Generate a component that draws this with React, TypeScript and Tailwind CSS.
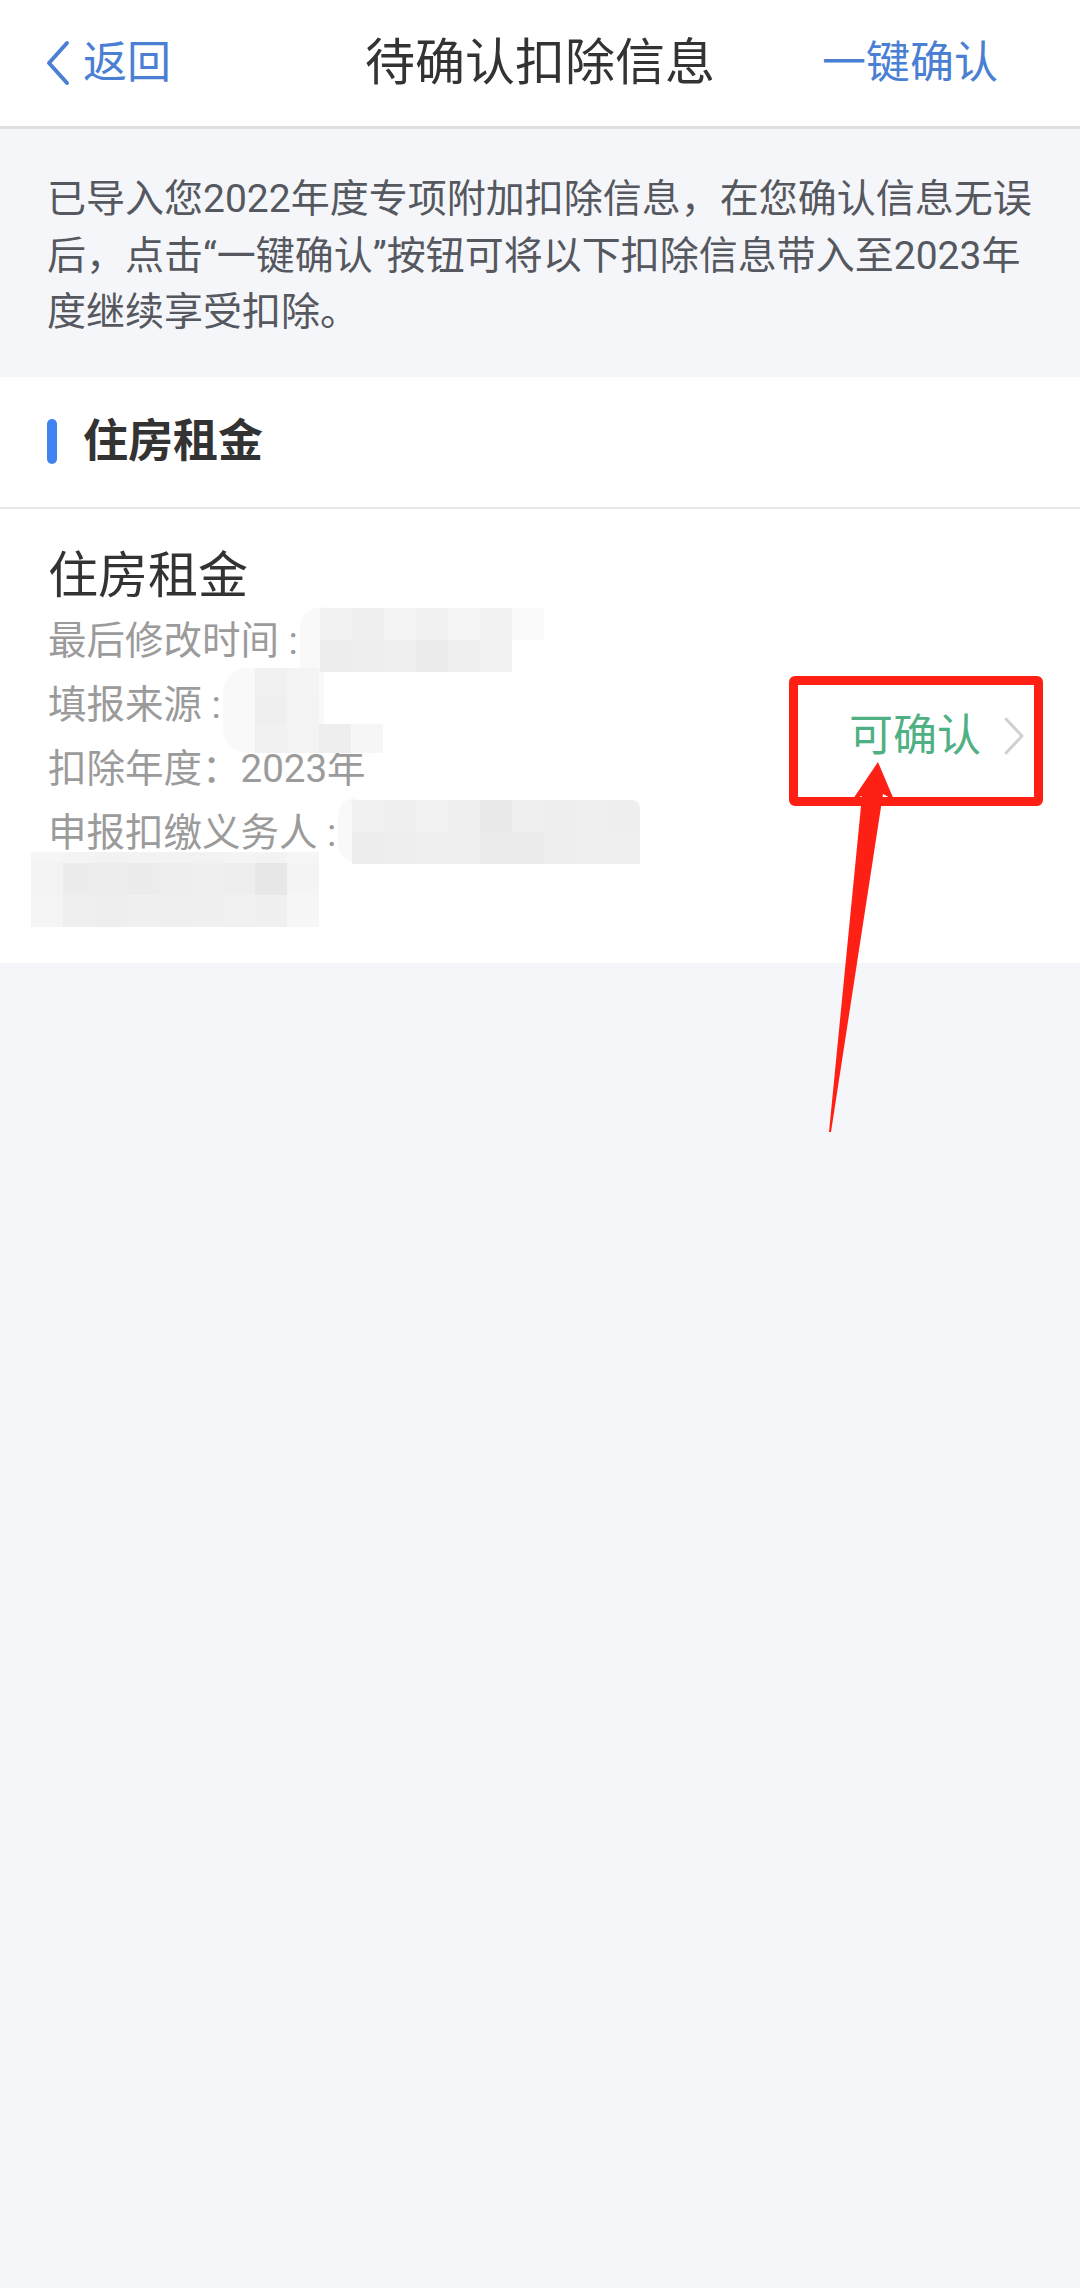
import React from 'react';

type Cell = string | null;

interface MosaicProps {
  className: string;
  cols: number;
  cellW: number;
  rowHeights: number[];
  cells: Cell[][];
}

// pixelated redaction blocks over private values
function Mosaic({ className, cols, cellW, rowHeights, cells }: MosaicProps) {
  return (
    <div className={`absolute flex flex-col overflow-hidden ${className}`}>
      {cells.map((row, r) => (
        <div key={r} className="flex">
          {Array.from({ length: cols }).map((_, c) => (
            <div
              key={c}
              style={{ width: cellW, height: rowHeights[r], background: row[c] ?? 'transparent' }}
            />
          ))}
        </div>
      ))}
    </div>
  );
}

const ROWS = [
  { label: '最后修改时间', colon: ' :', value: '' },
  { label: '填报来源', colon: ' :', value: '' },
  { label: '扣除年度', colon: '：', value: '2023年' },
  { label: '申报扣缴义务人', colon: ' :', value: '' },
];

export default function App() {
  return (
    <div
      className="relative min-h-[2288px] w-[1080px] bg-[#f5f6fa] overflow-hidden"
      style={{ fontFamily: 'Roboto, "Noto Sans CJK SC", sans-serif' }}
    >
      {/* Nav bar */}
      <div className="grid h-[129px] grid-cols-[1fr_auto_1fr] items-center border-b-[3px] border-[#dfdfdf] bg-white">
        <div className="flex items-center pl-[45px] text-[44px] text-[#4b7fd3]">
          <svg width="26" height="46" viewBox="0 0 26 46" fill="none">
            <path d="M22 3 L4 23 L22 43" stroke="#4b7fd3" strokeWidth="4" strokeLinecap="round" strokeLinejoin="round" />
          </svg>
          <span className="ml-[12px] leading-none">返回</span>
        </div>
        <div className="text-[50px] leading-none text-[#333333]">待确认扣除信息</div>
        <div className="flex justify-end pr-[82px] text-[44px] leading-none text-[#4b7fd3]">一键确认</div>
      </div>

      {/* Notice */}
      <div className="px-[47px] pt-[42px] pb-[36px] text-[39px] leading-[56.5px] text-[#55585e]">
        已导入您2022年度专项附加扣除信息，在您确认信息无误
        <br />
        后，点击“一键确认”按钮可将以下扣除信息带入至2023年
        <br />
        度继续享受扣除。
      </div>

      {/* Section header */}
      <div className="flex h-[132px] items-center border-b-2 border-[#e8e8e8] bg-white pl-[47px]">
        <div className="h-[45px] w-[10px] rounded-full bg-[#3f84ef]" />
        <div className="ml-[26px] text-[45px] font-bold leading-none text-[#333333]">住房租金</div>
      </div>

      {/* Item */}
      <div className="flex h-[454px] items-center justify-between bg-white">
        <div className="flex h-full flex-col pl-[48px] pt-[34px]">
          <div className="text-[50px] leading-[66px] text-[#333333]">住房租金</div>
          {ROWS.map(r => (
            <div key={r.label} className="text-[38.5px] leading-[64px] text-[#9b9b9b]">
              {r.label}
              {r.colon}
              {r.value}
            </div>
          ))}
          <div className="h-[64px]" />
        </div>
        <div className="flex items-center pr-[55px]">
          <span className="text-[44px] leading-none text-[#4fb083]">可确认</span>
          <svg className="ml-[22px]" width="22" height="40" viewBox="0 0 22 40" fill="none">
            <path d="M3 3 L19 20 L3 37" stroke="#d0d0d0" strokeWidth="3" strokeLinecap="round" strokeLinejoin="round" />
          </svg>
        </div>
      </div>

      {/* Redactions */}
      <div className="absolute left-[300px] top-[607px] h-[130px] w-[24px] rounded-l-[20px] bg-[#f9f9f9]" />
      <Mosaic
        className="left-[320px] top-[608px]"
        cols={7}
        cellW={32}
        rowHeights={[32, 32]}
        cells={[
          ['#f2f2f2', '#f0f0f0', '#f3f3f3', '#f1f1f1', '#f5f5f5', '#f2f2f2', '#fbfbfb'],
          ['#ededed', '#eeeeee', '#f0f0f0', '#ebebeb', '#efefef', '#f2f2f2', null],
        ]}
      />
      <Mosaic
        className="left-[223px] top-[668px] rounded-l-[24px]"
        cols={5}
        cellW={32}
        rowHeights={[28, 28, 29]}
        cells={[
          ['#f9f9f9', '#f1f1f1', '#f4f4f4', null, null],
          ['#f9f9f9', '#efefef', '#f3f3f3', null, null],
          ['#f9f9f9', '#f1f1f1', '#f3f3f3', '#eeeeee', '#f6f6f6'],
        ]}
      />
      <div className="absolute left-[338px] top-[798px] h-[64px] w-[20px] rounded-l-[18px] bg-[#f9f9f9]" />
      <Mosaic
        className="left-[352px] top-[800px] rounded-tr-[8px]"
        cols={9}
        cellW={32}
        rowHeights={[32, 32]}
        cells={[
          ['#f1f1f1', '#f0f0f0', '#f2f2f2', '#efefef', '#e9e9e9', '#efefef', '#eeeeee', '#efefef', '#eeeeee'],
          ['#ededed', '#eeeeee', '#f0f0f0', '#efefef', '#ebebeb', '#ececec', '#eeeeee', '#f0f0f0', '#f0f0f0'],
        ]}
      />
      <Mosaic
        className="left-[31px] top-[852px]"
        cols={9}
        cellW={32}
        rowHeights={[11, 32, 32]}
        cells={[
          ['#f6f6f6', '#f4f4f4', '#f2f2f2', '#f3f3f3', '#f3f3f3', '#f2f2f2', '#f4f4f4', '#f3f3f3', '#f6f6f6'],
          ['#f3f3f3', '#ececec', '#ededed', '#ececec', '#eeeeee', '#efefef', '#eeeeee', '#e7e7e7', '#f4f4f4'],
          ['#f5f5f5', '#efefef', '#eeeeee', '#f0f0f0', '#efefef', '#f0f0f0', '#f1f1f1', '#f0f0f0', '#f7f7f7'],
        ]}
      />

      {/* Red annotation */}
      <div className="absolute left-[789px] top-[676px] h-[130px] w-[254px] rounded-[6px] border-[9px] border-[#ff2015]" />
      <svg className="absolute left-0 top-0" width="1080" height="1200" viewBox="0 0 1080 1200">
        <polygon points="878,762 894,800 883,794 831,1132 829,1132 862,796 853,799" fill="#ff2015" />
      </svg>
    </div>
  );
}
